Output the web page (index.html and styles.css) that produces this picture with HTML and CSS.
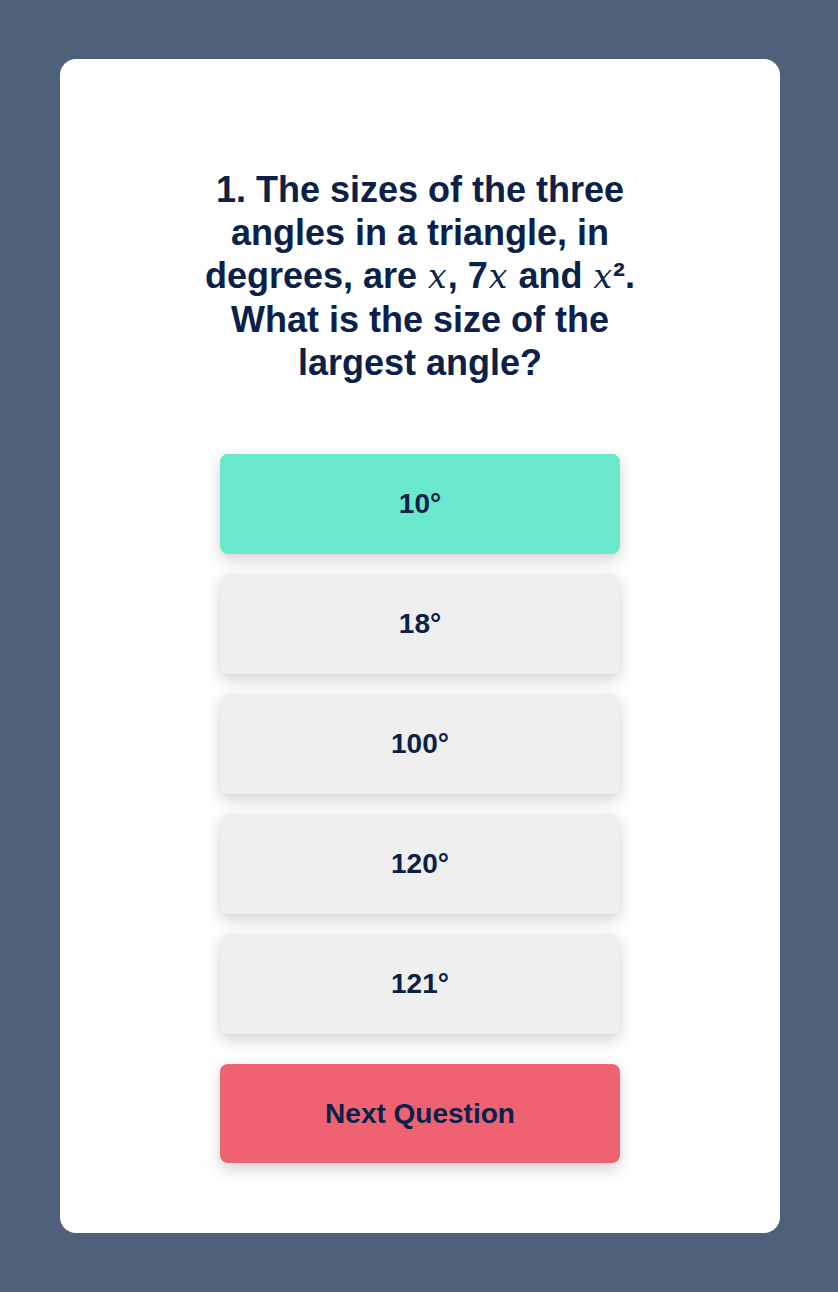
FILE: index.html
```html
<!DOCTYPE html>
<html lang="en">
<head>
<meta charset="utf-8">
<title>Quiz</title>
<link rel="stylesheet" href="styles.css">
</head>
<body>
<main class="page">
  <section class="card">
    <h1 class="question">1. The sizes of the three angles in a triangle, in degrees, are <span class="var">x</span>, 7<span class="var">x</span> and <span class="var">x</span>². What is the size of the largest angle?</h1>
    <div class="answers">
      <button class="answer correct">10°</button>
      <button class="answer">18°</button>
      <button class="answer">100°</button>
      <button class="answer">120°</button>
      <button class="answer">121°</button>
    </div>
    <button class="next">Next Question</button>
  </section>
</main>
</body>
</html>
```

FILE: styles.css
```css
html, body {
  margin: 0;
  padding: 0;
  background: #4e607a;
}
body {
  font-family: "Liberation Sans", Arial, sans-serif;
  color: #0b2149;
}
.page {
  padding: 59px 58px 59px 60px;
}
.card {
  width: 720px;
  height: 1174px;
  box-sizing: border-box;
  background: #ffffff;
  border-radius: 16px;
  padding: 109px 0 70px;
  display: flex;
  flex-direction: column;
  align-items: center;
}
.question {
  width: 450px;
  margin: 0 0 70px;
  font-size: 36px;
  line-height: 43.2px;
  font-weight: 700;
  text-align: center;
  color: #0b2149;
}
.var {
  font-family: "DejaVu Serif", "Liberation Serif", serif;
  font-style: italic;
  font-weight: 400;
  font-size: 33px;
  line-height: 0;
  padding: 0 1px;
}
.answers {
  display: flex;
  flex-direction: column;
  gap: 20px;
  width: 400px;
}
.answer, .next {
  width: 400px;
  height: 100px;
  border: none;
  border-radius: 8px;
  background: #efeff0;
  color: #0b2149;
  font-family: "Liberation Sans", Arial, sans-serif;
  font-size: 28px;
  font-weight: 700;
  box-shadow: 0 6px 16px rgba(0, 0, 0, 0.18);
  padding: 0;
}
.answer.correct {
  background: #6ae8cb;
}
.next {
  margin-top: 30px;
  background: #ee6272;
}
```
